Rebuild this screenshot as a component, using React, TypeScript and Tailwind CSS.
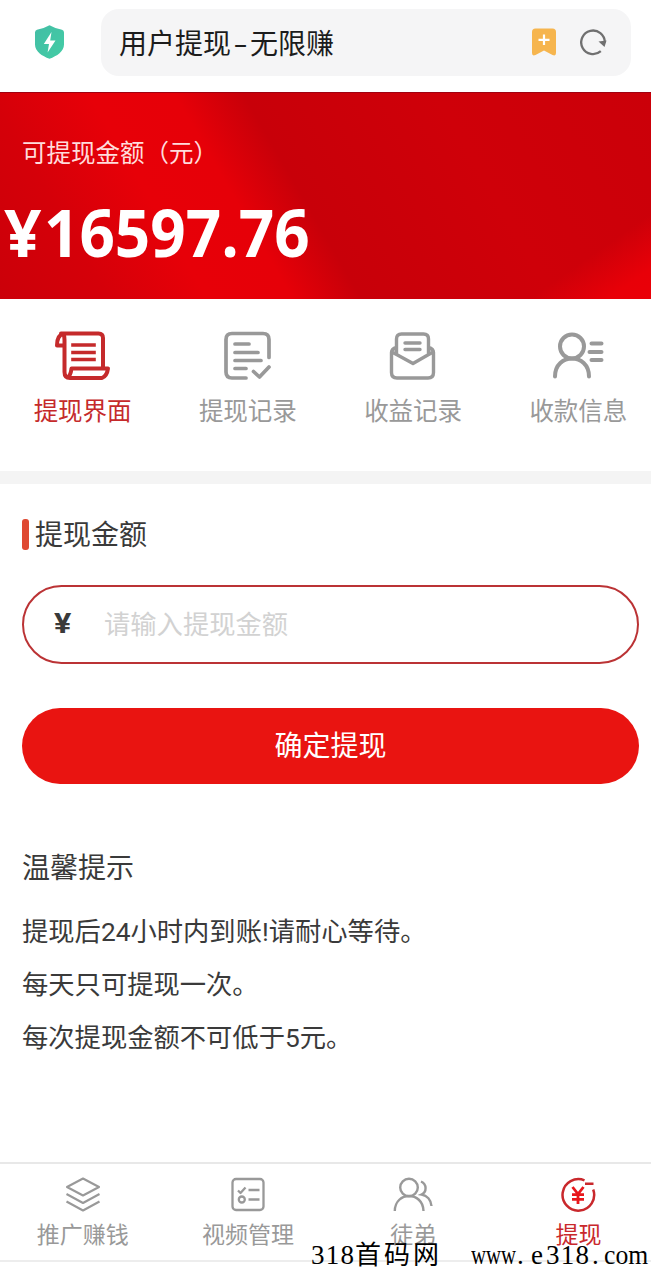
import React from "react";

type Item = { label: string; icon: React.ReactNode; active?: boolean };

const ScrollIcon = () => (
  <svg width="56" height="50" viewBox="0 0 56 50" fill="none" stroke="currentColor" strokeWidth="4" strokeLinejoin="round" strokeLinecap="round">
    <path d="M6 2.500H43.500Q48 2.500 48 7V37M8.500 3Q2 4 2 14.500H8.500M8.500 3Q9.500 5 9.500 9V41Q9.500 47 15 47H47Q52 45 53 37.500H16.500Q15.500 45.500 12 46.500" />
    <path d="M18 14H39M18 21.500H39M18 28.500H39" strokeLinecap="square" strokeWidth="3.600" />
  </svg>
);

const RecordIcon = () => (
  <svg width="48" height="50" viewBox="0 0 48 50" fill="none" stroke="currentColor" strokeWidth="3.7" strokeLinejoin="round" strokeLinecap="round">
    <path d="M22 47H8Q2 47 2 41V8.500Q2 2.500 8 2.500H39Q45 2.500 45 8.500V26.500M11 13H25M11 21.500H34M11 29.500H37M11 37.500H22M29.500 40.500L35.500 46L45 36" />
  </svg>
);

const MailIcon = () => (
  <svg width="48" height="50" viewBox="0 0 48 50" fill="none" stroke="currentColor" strokeWidth="3.4" strokeLinejoin="round" strokeLinecap="round">
    <path d="M7.500 22.500V8Q7.500 3 12.500 3H34.500Q39.500 3 39.500 8V22.500M7.500 16.500Q2.500 18 2.500 21.500V41.500Q2.500 47 8 47H39Q44.500 47 44.500 41.500V21.500Q44.500 18 39.500 16.500M3 21L24 32.500L44 21M16 12H31M16 18.500H31" />
  </svg>
);

const PayeeIcon = () => (
  <svg width="52" height="50" viewBox="0 0 52 50" fill="none" stroke="currentColor" strokeWidth="4" strokeLinecap="round">
    <circle cx="20" cy="15.500" r="12" />
    <path d="M3 45.500C3 21.500 37 21.500 37 45.500M39.500 12.500H49.500M37.500 21H49.500M39.500 29H49.500" />
  </svg>
);

const LayersIcon = () => (
  <svg width="36" height="38" viewBox="0 0 36 38" fill="none" stroke="currentColor" strokeWidth="2.100" strokeLinejoin="round">
    <path d="M18 2.500L34 11L18 19.500L2 11ZM1.500 18L18 27L34.500 18M1.500 25.500L18 34.500L34.500 25.500" />
  </svg>
);

const VideoListIcon = () => (
  <svg width="34" height="38" viewBox="0 0 34 38" fill="none" stroke="currentColor" strokeWidth="2.300" strokeLinejoin="round">
    <rect x="1.500" y="3" width="31" height="31" rx="3.500" />
    <path d="M7 14.500L9.500 17L14.500 11.500M17.500 14H28.500M17.500 23.500H28.500" />
    <circle cx="10.800" cy="23.500" r="3" />
  </svg>
);

const PeopleIcon = () => (
  <svg width="40" height="38" viewBox="0 0 40 38" fill="none" stroke="currentColor" strokeWidth="2.400">
    <circle cx="16" cy="11.500" r="8.800" />
    <path d="M1.800 35C2 15 30 15 30.500 35M28 5.500C34 8 34 16 28.500 18.500C34 19.500 38 24 38.500 30" />
  </svg>
);

const WithdrawIcon = () => (
  <svg width="36" height="38" viewBox="0 0 36 38" fill="none" stroke="currentColor" strokeWidth="2.500">
    <path d="M24.500 4.300A15.800 15.800 0 1 0 33.200 13.500M25 7.800H33.500" />
    <path d="M12.500 11L18 18L23.500 11M18 18V28M12 18.700H24M12 23.300H24" stroke="#e8171b" strokeWidth="2.800" />
  </svg>
);

const tabs: Item[] = [
  { label: "提现界面", icon: <ScrollIcon />, active: true },
  { label: "提现记录", icon: <RecordIcon /> },
  { label: "收益记录", icon: <MailIcon /> },
  { label: "收款信息", icon: <PayeeIcon /> },
];

const nav: Item[] = [
  { label: "推广赚钱", icon: <LayersIcon /> },
  { label: "视频管理", icon: <VideoListIcon /> },
  { label: "徒弟", icon: <PeopleIcon /> },
  { label: "提现", icon: <WithdrawIcon />, active: true },
];

export default function App() {
  return (
    <div lang="zh-CN" className="relative flex h-[1268px] w-[651px] flex-col overflow-hidden whitespace-nowrap bg-white font-['Noto_Sans_CJK_SC',sans-serif] text-[#3a3a3a]">
      <header className="flex h-[92px] shrink-0 items-start pt-[9px]">
        <div className="flex h-[67px] w-[101px] items-center pl-[34px]">
          <svg width="31" height="35" viewBox="0 0 31 35">
            <defs>
              <linearGradient id="shield" x1="0" y1="0" x2="1" y2="1">
                <stop offset="0" stopColor="#43bda5" />
                <stop offset="1" stopColor="#43cda5" />
              </linearGradient>
            </defs>
            <path d="M15.500 .3Q21 3.500 28 4.800Q30 5.500 30 7.500V19.500C30 26.500 23 31 15.500 33.800C8 31 1 26.500 1 19.500V7.500Q1 5.500 3 4.800Q10 3.500 15.500 .3Z" fill="url(#shield)" />
            <path d="M17.500 7L9.800 19H15L13.600 27.500L21.500 15.500H16.200Z" fill="white" />
          </svg>
        </div>
        <div className="flex h-[67px] w-[530px] items-center rounded-[18px] bg-[#f5f5f6] pb-[2px] pl-[18px] pr-[24px]">
          <div className="flex flex-1 text-[28px] leading-[40px] text-[#1c1c1c]">
            <span>用户提现</span>
            <span className="w-[19px] scale-x-[1.500] text-center">-</span>
            <span>无限赚</span>
          </div>
          <svg width="26" height="30" viewBox="0 0 26 30" className="mr-[23px]">
            <path d="M4.500 1.500H21.500Q25 1.500 25 5V26Q25 29.500 21.500 28L13 23.500L4.500 28Q1 29.500 1 26V5Q1 1.500 4.500 1.500Z" fill="#f6b54e" />
            <path d="M13 7.500V18M7.500 12.800H18.500" stroke="white" strokeWidth="2.200" />
          </svg>
          <svg width="27" height="28" viewBox="0 0 27 28" fill="none">
            <path d="M20.800 23.200A11.800 11.800 0 1 1 24.800 14.500" stroke="#707070" strokeWidth="2.300" />
            <path d="M18.500 13.500L26.500 12.500L24.500 19Z" fill="#707070" />
          </svg>
        </div>
      </header>

      <section className="flex h-[207px] shrink-0 flex-col border-t border-[#a00010] bg-[linear-gradient(325deg,#ea0008_0px,#e80008_25px,#e8000800_70px),linear-gradient(60deg,#cb0009_0%,#d50009_14%,#e70008_27%,#e60008_38%,#c80009_47%,#cf0009_72%,#cb0009_100%)] text-white">
        <div className="mt-[41px] pl-[22px] text-[24.500px] leading-[36px] text-[#ffdcdc]">可提现金额（元）</div>
        <div className="mt-[26px] flex h-[70px] items-center pl-[4px] font-['Open_Sans',sans-serif] text-[67px] font-bold leading-[70px]">
          <span className="w-[40px] origin-left scale-x-[0.980]">¥</span>
          <span className="origin-left scale-x-[0.925]">16597.76</span>
        </div>
      </section>

      <nav className="grid h-[172px] w-[661px] shrink-0 grid-cols-4 pt-[32px] text-[24.500px] text-[#999]">
        {tabs.map((t) => (
          <div key={t.label} className={t.active ? "flex flex-col items-center text-[#c52a2b]" : "flex flex-col items-center"}>
            {t.icon}
            <span className="mt-[11px] leading-[36px]">{t.label}</span>
          </div>
        ))}
      </nav>
      <div className="h-[13px] shrink-0 bg-[#f4f4f4]" />

      <main className="flex flex-1 flex-col pl-[22px] pr-[12px] pt-[32px]">
        <div className="flex h-[36px] items-center gap-[6px] text-[28px] leading-[36px]">
          <span className="h-[31px] w-[7px] rounded-[3px] bg-[#df4932]" />
          <span className="pb-[3px]">提现金额</span>
        </div>
        <div className="mt-[33px] flex h-[79px] items-center rounded-full border-2 border-[#bb3335] pb-[4px] pl-[30px]">
          <span className="w-[50px] pt-[3px]">
            <span className="inline-block origin-left scale-x-[1.200] font-['Roboto',sans-serif] text-[27px] font-bold">¥</span>
          </span>
          <span className="text-[26.300px] text-[#d2d2d2]">请输入提现金额</span>
        </div>
        <button className="mt-[44px] h-[76px] rounded-full bg-[#e91411] pb-[5px] text-[28px] text-white">确定提现</button>
        <h2 className="mt-[62px] text-[28px] leading-[40px]">温馨提示</h2>
        <div className="mt-[20px] font-['Roboto','Noto_Sans_CJK_SC',sans-serif] text-[26.300px] leading-[53px]">
          <p>提现后24小时内到账!请耐心等待。</p>
          <p>每天只可提现一次。</p>
          <p>每次提现金额不可低于5元。</p>
        </div>
      </main>

      <footer className="h-[106px] shrink-0 border-t-2 border-[#e8e8e8]">
        <div className="grid h-[98px] w-[661px] grid-cols-4 border-b-2 border-[#ededed] pt-[12px] text-[23px] text-[#999]">
          {nav.map((n) => (
            <div key={n.label} className={n.active ? "flex flex-col items-center text-[#c9282c]" : "flex flex-col items-center"}>
              {n.icon}
              <span className="mt-[2px] leading-[34px]">{n.label}</span>
            </div>
          ))}
        </div>
      </footer>

      <div className="absolute bottom-[-4px] left-[311px] flex items-baseline font-['Liberation_Serif','Noto_Sans_CJK_SC',serif] text-[27px] leading-[32px] text-black">
        <span className="w-[44px] tracking-[1.200px]">318</span>
        <span className="w-[116px] tracking-[3px] text-[26px]">首码网</span>
        <span className="w-[46px] origin-left scale-x-[0.770]">www</span>
        <span className="w-[14px]">.</span>
        <span className="w-[15px]">e</span>
        <span className="w-[46px] tracking-[1.300px]">318</span>
        <span className="w-[12px]">.</span>
        <span className="origin-left scale-x-[0.950]">com</span>
      </div>
    </div>
  );
}
